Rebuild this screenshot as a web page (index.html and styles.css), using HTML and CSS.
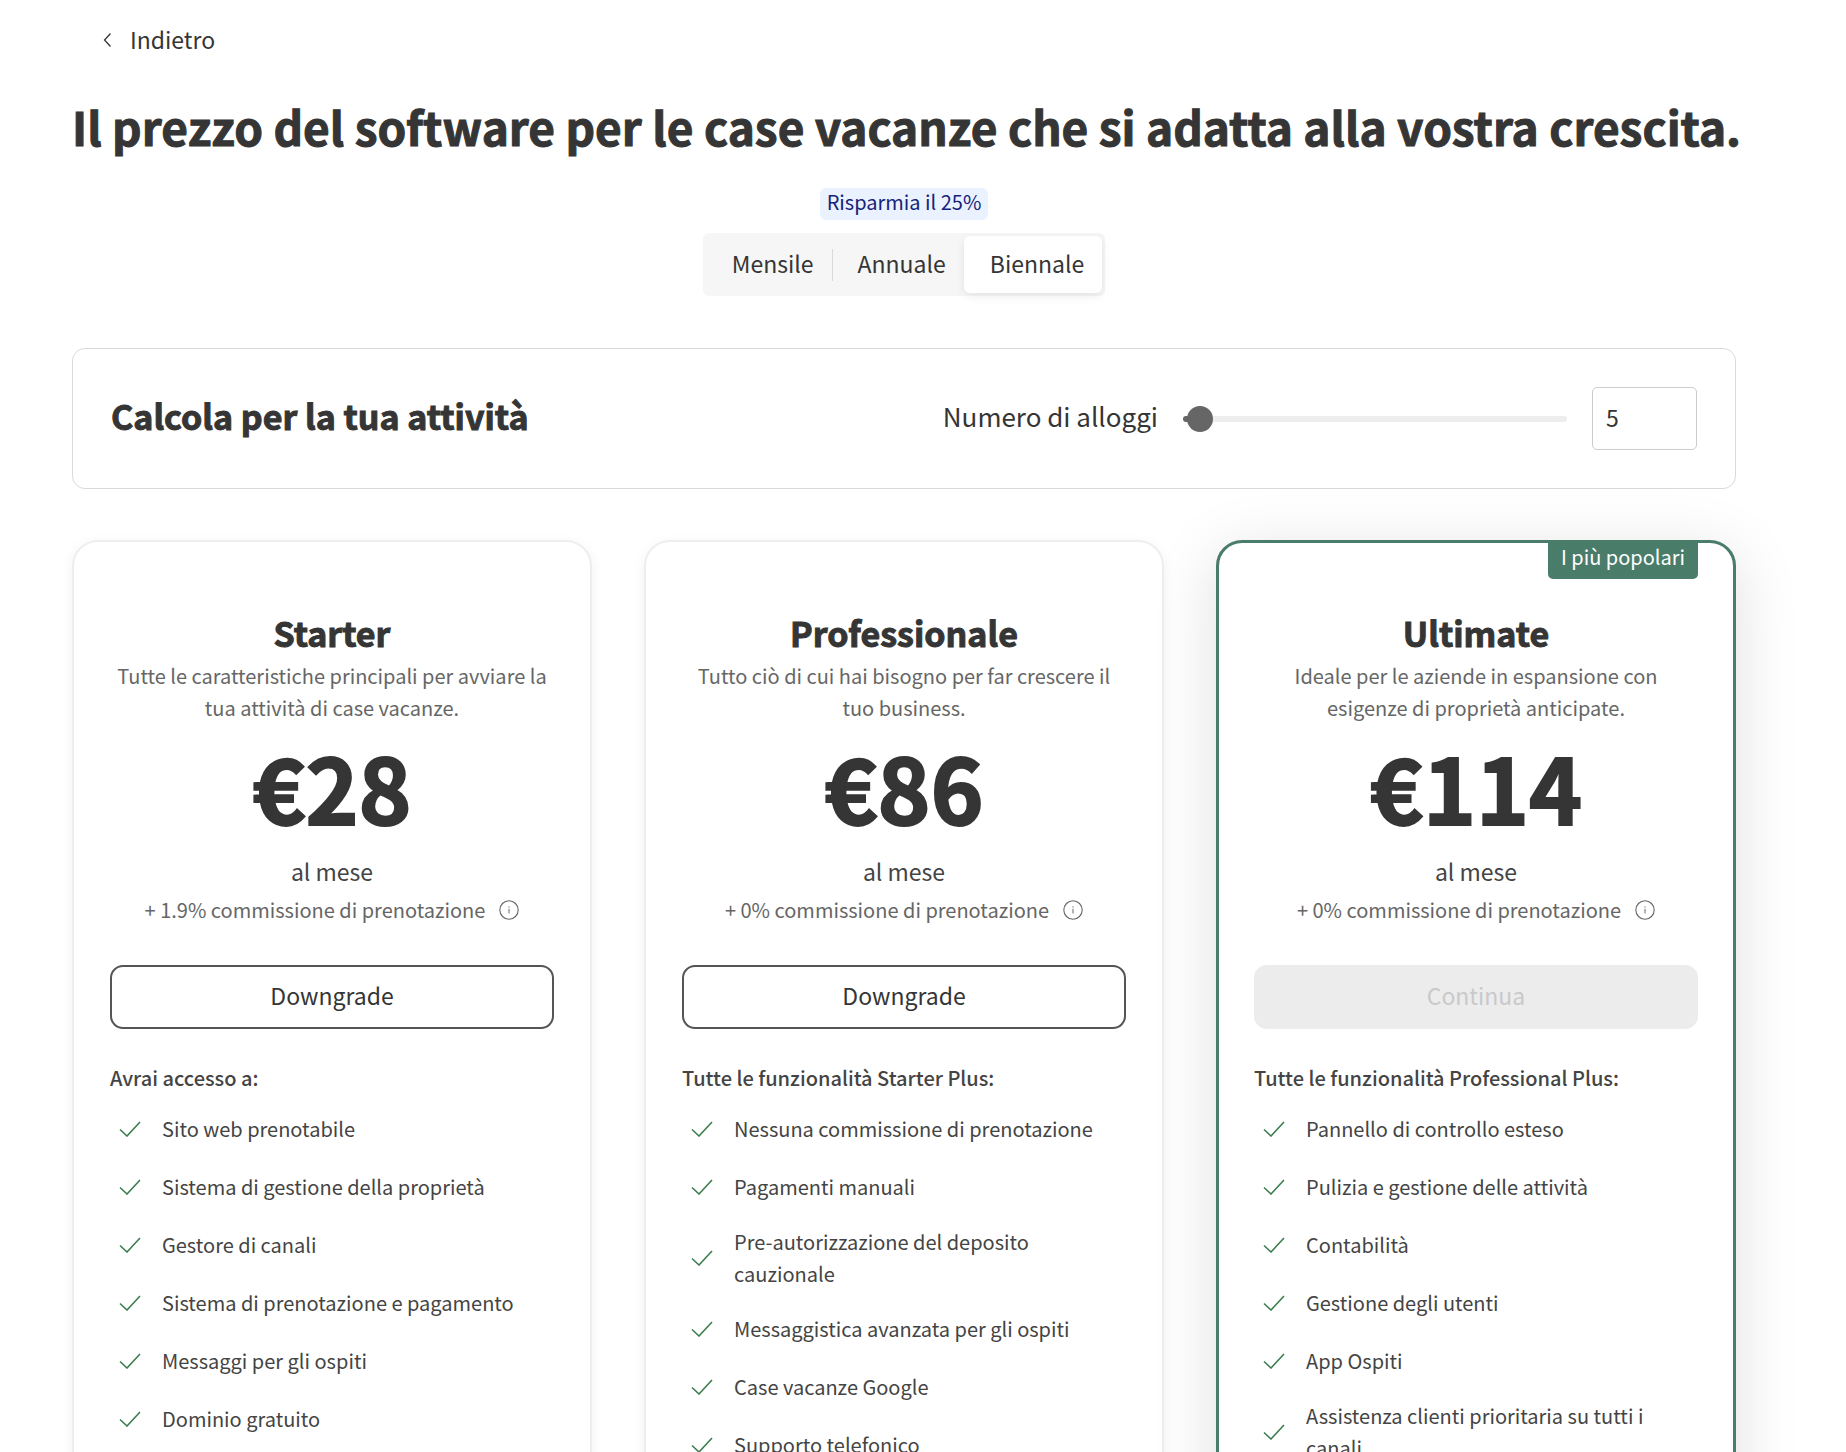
FILE: index.html
```html
<!DOCTYPE html>
<html lang="it">
<head>
<meta charset="utf-8">
<meta name="viewport" content="width=device-width, initial-scale=1">
<title>Prezzi</title>
<link rel="stylesheet" href="styles.css">
</head>
<body>
<svg class="sprite" aria-hidden="true">
  <symbol id="check" viewBox="0 0 22 16"><path d="M1 8.5 8 15 21 1" fill="none" stroke="currentColor" stroke-width="1.6"/></symbol>
  <symbol id="info" viewBox="0 0 20 20"><circle cx="10" cy="10" r="9.2" fill="none" stroke="currentColor" stroke-width="1.1"/><path d="M10 8.8v4.6M10 6.4v1.2" fill="none" stroke="currentColor" stroke-width="1"/></symbol>
</svg>
<main class="page">
  <nav class="nav">
    <a class="back" href="#">
      <svg class="back-icon" viewBox="0 0 10 16" aria-hidden="true"><path d="M8.500 2.500 2.500 9l6 6.500" fill="none" stroke="currentColor" stroke-width="1.3"/></svg>
      Indietro
    </a>
  </nav>
  <h1 class="title">Il prezzo del software per le case vacanze che si adatta alla vostra crescita.</h1>
  <div class="billing">
    <span class="saving">Risparmia il 25%</span>
    <div class="segments" role="group" aria-label="Fatturazione">
      <button class="segment" type="button" aria-pressed="false">Mensile</button>
      <button class="segment segment-divided" type="button" aria-pressed="false">Annuale</button>
      <button class="segment segment-active" type="button" aria-pressed="true">Biennale</button>
    </div>
  </div>
  <section class="calculator">
    <h2 class="heading">Calcola per la tua attività</h2>
    <div class="controls">
      <label class="controls-label" for="count">Numero di alloggi</label>
      <input class="slider" type="range" min="1" max="350" value="5" aria-label="Numero di alloggi">
      <input class="count" id="count" type="text" inputmode="numeric" value="5">
    </div>
  </section>
  <section class="plans">
    <article class="plan">
      <h2 class="heading">Starter</h2>
      <p class="summary">Tutte le caratteristiche principali per avviare la tua attività di case vacanze.</p>
      <p class="price">€28</p>
      <p class="period">al mese</p>
      <p class="fee">+ 1.9% commissione di prenotazione <svg class="info"><use href="#info"/></svg></p>
      <button class="action" type="button">Downgrade</button>
      <h3 class="includes">Avrai accesso a:</h3>
      <ul class="features">
        <li class="feature"><svg class="check"><use href="#check"/></svg>Sito web prenotabile</li>
        <li class="feature"><svg class="check"><use href="#check"/></svg>Sistema di gestione della proprietà</li>
        <li class="feature"><svg class="check"><use href="#check"/></svg>Gestore di canali</li>
        <li class="feature"><svg class="check"><use href="#check"/></svg>Sistema di prenotazione e pagamento</li>
        <li class="feature"><svg class="check"><use href="#check"/></svg>Messaggi per gli ospiti</li>
        <li class="feature"><svg class="check"><use href="#check"/></svg>Dominio gratuito</li>
      </ul>
    </article>
    <article class="plan">
      <h2 class="heading">Professionale</h2>
      <p class="summary">Tutto ciò di cui hai bisogno per far crescere il tuo business.</p>
      <p class="price">€86</p>
      <p class="period">al mese</p>
      <p class="fee">+ 0% commissione di prenotazione <svg class="info"><use href="#info"/></svg></p>
      <button class="action" type="button">Downgrade</button>
      <h3 class="includes">Tutte le funzionalità Starter Plus:</h3>
      <ul class="features">
        <li class="feature"><svg class="check"><use href="#check"/></svg>Nessuna commissione di prenotazione</li>
        <li class="feature"><svg class="check"><use href="#check"/></svg>Pagamenti manuali</li>
        <li class="feature"><svg class="check"><use href="#check"/></svg>Pre-autorizzazione del deposito cauzionale</li>
        <li class="feature"><svg class="check"><use href="#check"/></svg>Messaggistica avanzata per gli ospiti</li>
        <li class="feature"><svg class="check"><use href="#check"/></svg>Case vacanze Google</li>
        <li class="feature"><svg class="check"><use href="#check"/></svg>Supporto telefonico</li>
      </ul>
    </article>
    <article class="plan plan-popular">
      <span class="ribbon">I più popolari</span>
      <h2 class="heading">Ultimate</h2>
      <p class="summary">Ideale per le aziende in espansione con esigenze di proprietà anticipate.</p>
      <p class="price">€114</p>
      <p class="period">al mese</p>
      <p class="fee">+ 0% commissione di prenotazione <svg class="info"><use href="#info"/></svg></p>
      <button class="action" type="button" disabled>Continua</button>
      <h3 class="includes">Tutte le funzionalità Professional Plus:</h3>
      <ul class="features">
        <li class="feature"><svg class="check"><use href="#check"/></svg>Pannello di controllo esteso</li>
        <li class="feature"><svg class="check"><use href="#check"/></svg>Pulizia e gestione delle attività</li>
        <li class="feature"><svg class="check"><use href="#check"/></svg>Contabilità</li>
        <li class="feature"><svg class="check"><use href="#check"/></svg>Gestione degli utenti</li>
        <li class="feature"><svg class="check"><use href="#check"/></svg>App Ospiti</li>
        <li class="feature"><svg class="check"><use href="#check"/></svg>Assistenza clienti prioritaria su tutti i canali</li>
      </ul>
    </article>
  </section>
</main>
</body>
</html>
```
FILE: styles.css
```css
* { box-sizing: border-box; }

body {
  margin: 0;
  height: 100vh;
  overflow: hidden;
  background: #fff;
  color: #353535;
  font-family: "Noto Sans CJK SC", "Noto Sans", sans-serif;
  font-size: 20px;
  line-height: 32px;
}

h1, h2, h3, p, ul { margin: 0; padding: 0; }
button, input { font: inherit; color: inherit; }
svg { flex: none; }
.sprite { display: none; }

.page {
  display: flex;
  flex-direction: column;
  padding: 23px 110px 40px 72px;
}

.nav { display: flex; padding-left: 30px; }
.back {
  display: flex;
  align-items: center;
  gap: 18px;
  color: #353535;
  font-size: 23px;
  text-decoration: none;
}
.back-icon { width: 10px; height: 16px; }

.title {
  margin-top: 41px;
  font-size: 46px;
  line-height: 60px;
  font-weight: 700;
  text-align: center;
  white-space: nowrap;
  -webkit-text-stroke: 1px currentColor;
}

.billing {
  display: flex;
  flex-direction: column;
  align-items: center;
  gap: 13px;
  margin-top: 32px;
}
.saving {
  padding: 0 7px 4px;
  border-radius: 6px;
  background: #e9f2fe;
  color: #17237a;
  line-height: 28px;
}
.segments {
  display: flex;
  align-items: stretch;
  height: 63px;
  padding: 3px;
  border-radius: 6px;
  background: #f6f6f6;
}
.segment {
  position: relative;
  padding: 0 18px 4px 26px;
  border: 0;
  border-radius: 6px;
  background: transparent;
  font-size: 23px;
}
.segment-divided::before {
  content: "";
  position: absolute;
  left: 0;
  top: 13px;
  width: 1px;
  height: 32px;
  background: #d9d9d9;
}
.segment-active {
  background: #fff;
  box-shadow: 0 3px 10px rgba(0, 0, 0, 0.08);
}

.calculator {
  display: flex;
  align-items: center;
  justify-content: space-between;
  height: 141px;
  margin-top: 52px;
  padding: 0 38px;
  border: 1px solid #d9d9d9;
  border-radius: 13px;
}
.heading {
  font-size: 34px;
  line-height: 44px;
  font-weight: 700;
  -webkit-text-stroke: 1px currentColor;
}
.calculator .heading, .controls-label { padding-bottom: 6px; }
.controls { display: flex; align-items: center; gap: 25px; }
.controls-label { font-size: 26px; }
.slider {
  appearance: none;
  width: 384px;
  height: 26px;
  margin: 0;
  background: transparent;
}
.slider::-webkit-slider-runnable-track {
  height: 6px;
  border-radius: 3px;
  background: linear-gradient(to right, #666 13px, #ededed 13px);
}
.slider::-webkit-slider-thumb {
  appearance: none;
  width: 26px;
  height: 26px;
  margin-top: -10px;
  border-radius: 50%;
  background: #666;
}
.count {
  width: 105px;
  height: 63px;
  padding: 0 13px 4px;
  border: 1px solid #ccc;
  border-radius: 5px;
  background: #fff;
  font-size: 23px;
}

.plans {
  display: grid;
  grid-template-columns: repeat(3, 1fr);
  gap: 52px;
  margin-top: 51px;
}
.plan {
  position: relative;
  display: flex;
  flex-direction: column;
  padding: 69px 36px 40px;
  border: 2px solid #eee;
  border-radius: 26px;
  background: #fff;
  box-shadow: 0 3px 13px rgba(0, 0, 0, 0.06);
  text-align: center;
}
.plan-popular {
  padding: 68px 35px 40px;
  border: 3px solid #4a7c6a;
  box-shadow: 0 13px 65px rgba(0, 0, 0, 0.13);
}
.ribbon {
  position: absolute;
  top: -3px;
  right: 35px;
  height: 39px;
  padding: 0 13px;
  border-radius: 0 0 5px 5px;
  background: #4a7c6a;
  color: #fff;
  line-height: 34px;
}
.summary { margin-top: 5px; color: #666; }
.price {
  margin-top: 10px;
  font-size: 90px;
  line-height: 104px;
  font-weight: 700;
  -webkit-text-stroke: 2px currentColor;
}
.period { margin-top: 17px; color: #444; font-size: 23px; }
.fee {
  display: flex;
  align-items: center;
  justify-content: center;
  gap: 14px;
  margin-top: 7px;
  color: #666;
}
.info { width: 20px; height: 20px; }
.action {
  height: 64px;
  margin-top: 39px;
  padding: 0 0 4px;
  border: 2px solid #555;
  border-radius: 13px;
  background: #fff;
  font-size: 23px;
}
.action:disabled {
  border-color: #ececec;
  background: #ececec;
  color: #c9c9c9;
}
.includes {
  margin-top: 33px;
  color: #444;
  font-size: 20px;
  font-weight: 500;
  text-align: left;
}
.features {
  margin-top: 6px;
  color: #444;
  list-style: none;
  text-align: left;
}
.feature {
  display: flex;
  align-items: center;
  gap: 21px;
  min-height: 58px;
  padding: 10px 8px 10px 9px;
}
.check { width: 22px; height: 16px; color: #3c7d4f; }
```
